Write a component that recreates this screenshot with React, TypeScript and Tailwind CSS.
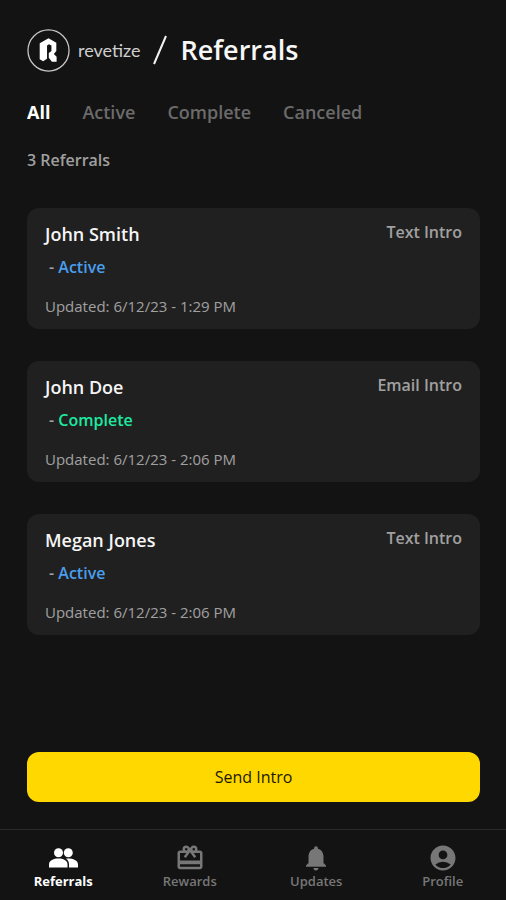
import { useState } from "react";
import type { ReactNode } from "react";
import { MdAccountCircle, MdNotifications } from "react-icons/md";

type Status = "Active" | "Complete";

interface Referral {
  name: string;
  status: Status;
  intro: string;
  updated: string;
}

const referrals: Referral[] = [
  { name: "John Smith", status: "Active", intro: "Text Intro", updated: "6/12/23 - 1:29 PM" },
  { name: "John Doe", status: "Complete", intro: "Email Intro", updated: "6/12/23 - 2:06 PM" },
  { name: "Megan Jones", status: "Active", intro: "Text Intro", updated: "6/12/23 - 2:06 PM" },
];

const statusColors: Record<Status, string> = {
  Active: "text-[#4a9eed]",
  Complete: "text-[#1de9a0]",
};

function Logo() {
  return (
    <div className="flex items-center gap-2">
      <svg viewBox="0 0 44 44" className="size-[43px]" aria-hidden="true">
        <circle cx="22" cy="22" r="21" fill="none" stroke="#c8c8c8" strokeWidth="1.300" />
        <path
          fill="#fff"
          d="M13 14.500 L22 9.500 L30 14 V22.500 L27.500 25.500 L30.300 28.500 V33.500 H25.500 L22.300 29.500 V24.500 L25 22.500 V17 L22.500 15.500 L20.500 17 V30.500 L16.500 33 L13 31 Z"
        />
      </svg>
      <span className="font-['Lato',sans-serif] text-lg leading-6 text-[#cfcfcf]">revetize</span>
    </div>
  );
}

function PeopleIcon() {
  return (
    <svg viewBox="0 0 29 20" className="h-5 w-[29px]" fill="currentColor" aria-hidden="true">
      <circle cx="9.500" cy="4.800" r="4.500" />
      <circle cx="19.300" cy="4.800" r="4.500" />
      <path d="M0 19.500v-3.300C0 12.300 4.800 10.500 9.500 10.500s9 1.800 9 5.700v3.300Z" />
      <path d="M16.800 10.600c6-.6 12.200 1.400 12.200 5.600v3.300h-9v-3.300c0-2.400-1.200-4.300-3.200-5.600Z" />
    </svg>
  );
}

function GiftCardIcon() {
  return (
    <svg viewBox="0 0 24 24" className="size-[30px]" fill="currentColor" aria-hidden="true">
      <path d="M20 6h-2.180c.11-.31.18-.65.18-1a3 3 0 0 0-3-3c-1.050 0-1.960.54-2.500 1.350l-.5.670-.5-.680A3 3 0 0 0 9 2a3 3 0 0 0-3 3c0 .35.070.69.180 1H4c-1.110 0-1.990.89-1.990 2L2 19c0 1.110.89 2 2 2h16c1.110 0 2-.89 2-2V8c0-1.110-.89-2-2-2Zm-5-2a1 1 0 1 1 0 2 1 1 0 0 1 0-2ZM9 4a1 1 0 1 1 0 2 1 1 0 0 1 0-2Zm11 15H4v-2h16v2Zm0-5H4V8h5.080L7 10.830 8.620 12 12 7.400l3.380 4.600L17 10.830 14.920 8H20v6Z" />
    </svg>
  );
}

function ReferralCard({ name, status, intro, updated }: Referral) {
  return (
    <article className="rounded-xl bg-[#202020] px-[18px] py-3">
      <div className="flex items-start justify-between">
        <h2 className="text-lg leading-7 font-semibold text-[#f5f5f5]">{name}</h2>
        <span className="text-base leading-6 font-semibold text-[#a0a0a0]">{intro}</span>
      </div>
      <p className="mt-[7px] pl-1 text-base leading-6 font-semibold text-[#a0a0a0]">
        - <span className={statusColors[status]}>{status}</span>
      </p>
      <p className="mt-4 text-[15px] leading-[22px] text-[#a0a0a0]">Updated: {updated}</p>
    </article>
  );
}

const tabs = ["All", "Active", "Complete", "Canceled"];

const navItems: { label: string; icon: ReactNode }[] = [
  { label: "Referrals", icon: <PeopleIcon /> },
  { label: "Rewards", icon: <GiftCardIcon /> },
  { label: "Updates", icon: <MdNotifications size={30} /> },
  { label: "Profile", icon: <MdAccountCircle size={30} /> },
];

export default function App() {
  const [tab, setTab] = useState("All");
  const [page, setPage] = useState("Referrals");
  const shown = referrals.filter((r) => tab === "All" || r.status === tab);

  return (
    <div className="flex min-h-screen flex-col bg-[#131313] font-['Open_Sans','Noto_Sans',sans-serif]">
      <main className="flex flex-1 flex-col pt-7 pr-[26px] pl-[27px]">
        <header className="flex h-11 items-center">
          <Logo />
          <svg viewBox="0 0 14 30" className="ml-3 h-[30px] w-3.5" aria-hidden="true">
            <path d="M13 1 1 29" stroke="#f2f2f2" strokeWidth="2" />
          </svg>
          <h1 className="ml-3.5 text-[27px] leading-9 font-semibold text-[#f7f7f7]">Referrals</h1>
        </header>

        <div role="tablist" className="mt-7 flex text-lg leading-6">
          {tabs.map((t) => (
            <button
              key={t}
              role="tab"
              aria-selected={t === tab}
              onClick={() => setTab(t)}
              className={`mr-8 ${t === tab ? "font-bold text-white" : "font-semibold text-[#6b6b6b]"}`}
            >
              {t}
            </button>
          ))}
        </div>

        <p className="mt-6 text-base leading-6 font-semibold text-[#a0a0a0]">{shown.length} Referrals</p>

        <section aria-label="Referrals" className="mt-9 flex flex-col gap-8">
          {shown.map((r) => (
            <ReferralCard key={r.name} {...r} />
          ))}
        </section>

        <button className="mt-auto mb-[27px] h-[50px] w-full rounded-xl bg-[#ffd800] text-base text-[#1c1800]">
          Send Intro
        </button>
      </main>

      <nav className="grid grid-cols-4 border-t border-[#2b2b2b] pt-3.5 pb-2.5">
        {navItems.map(({ label, icon }) => (
          <button
            key={label}
            onClick={() => setPage(label)}
            className={`flex flex-col items-center ${label === page ? "font-bold text-white" : "font-semibold text-[#777777]"}`}
          >
            <span className="flex h-7 items-center">{icon}</span>
            <span className="text-[13px] leading-[18px]">{label}</span>
          </button>
        ))}
      </nav>
    </div>
  );
}
